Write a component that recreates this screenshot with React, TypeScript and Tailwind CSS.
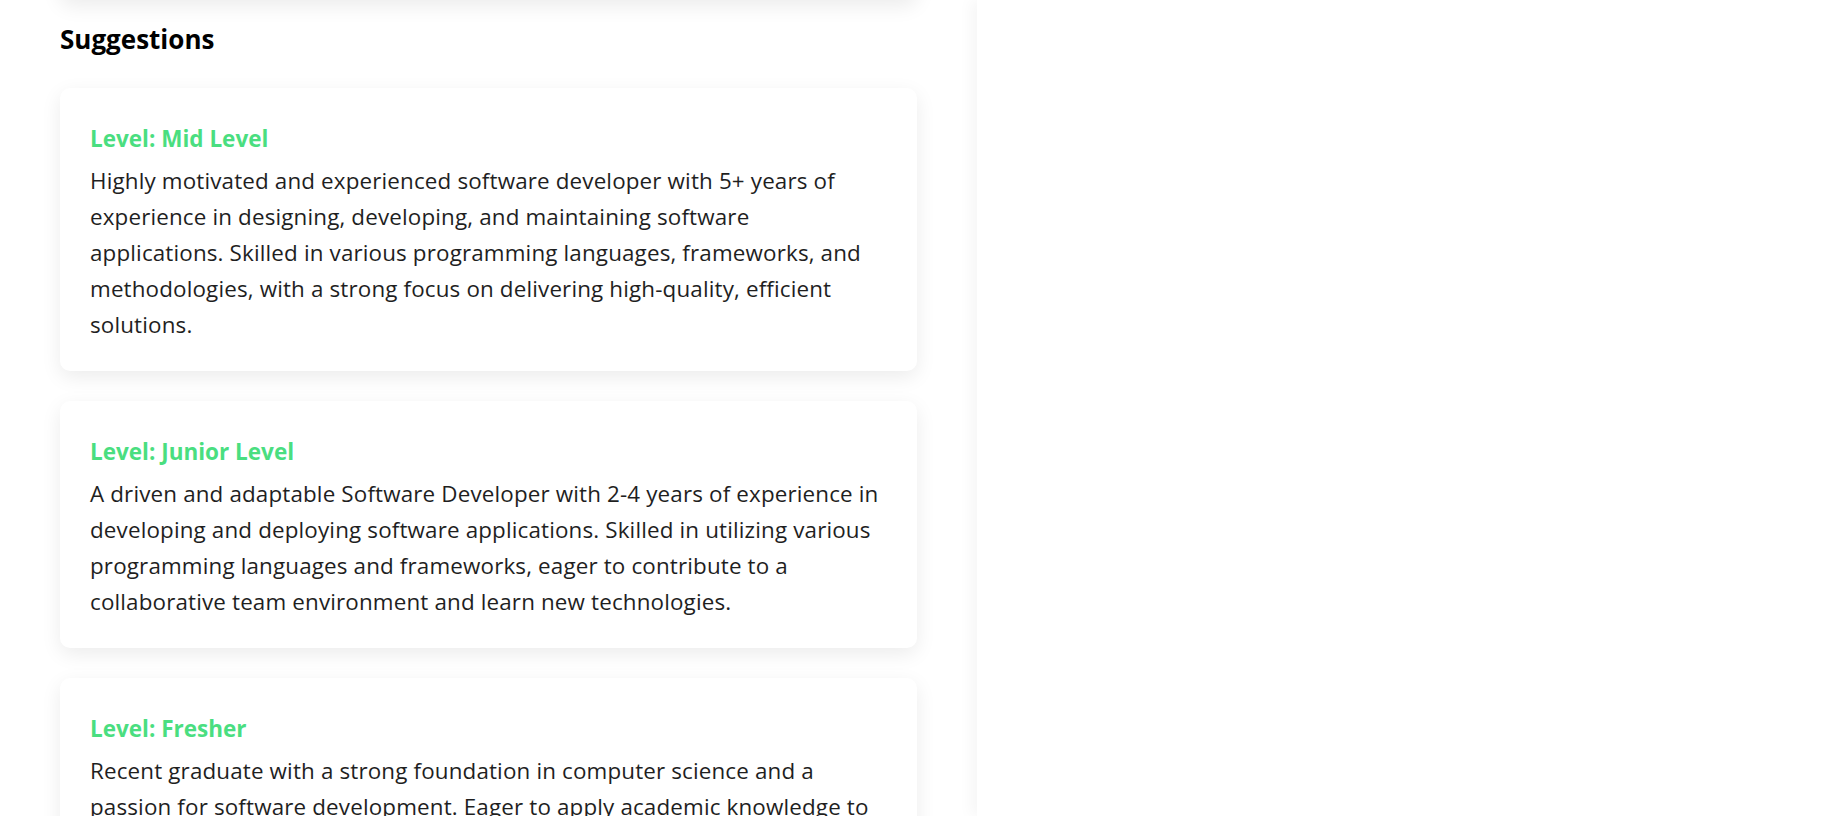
import React from 'react';

interface Suggestion {
  level: string;
  lines: string[];
}

// lines are kept as they wrap in the design
const suggestions: Suggestion[] = [
  {
    level: 'Mid Level',
    lines: [
      'Highly motivated and experienced software developer with 5+ years of',
      'experience in designing, developing, and maintaining software',
      'applications. Skilled in various programming languages, frameworks, and',
      'methodologies, with a strong focus on delivering high-quality, efficient',
      'solutions.',
    ],
  },
  {
    level: 'Junior Level',
    lines: [
      'A driven and adaptable Software Developer with 2-4 years of experience in',
      'developing and deploying software applications. Skilled in utilizing various',
      'programming languages and frameworks, eager to contribute to a',
      'collaborative team environment and learn new technologies.',
    ],
  },
  {
    level: 'Fresher',
    lines: [
      'Recent graduate with a strong foundation in computer science and a',
      'passion for software development. Eager to apply academic knowledge to',
      'real-world projects, learn from experienced professionals, and grow as a',
      'developer in a dynamic team.',
    ],
  },
];

function SuggestionCard({ level, lines }: Suggestion) {
  return (
    <div className="bg-white rounded-[10px] shadow-[0_6px_20px_rgba(0,0,0,0.08)] px-[30px] pt-[37px] pb-[28px]">
      <h3 className="text-[22.5px] leading-[28px] font-bold text-[#4ade80]">Level: {level}</h3>
      <p className="mt-[10px] whitespace-nowrap text-[22.4px] leading-[36px] tracking-[0.15px] text-[#1f1f1f]">
        {lines.map((line, i) => (
          <React.Fragment key={i}>
            {line}
            {i < lines.length - 1 && <br />}
          </React.Fragment>
        ))}
      </p>
    </div>
  );
}

export default function App() {
  return (
    <div className="flex h-[816px] overflow-hidden bg-white font-['Open_Sans',sans-serif]">
      {/* Left panel */}
      <div className="w-[977px] shrink-0 px-[60px]">
        {/* previous card, scrolled out of view */}
        <div className="h-[100px] -mt-[100px] bg-white rounded-[10px] shadow-[0_6px_20px_rgba(0,0,0,0.08)]" />

        <h2 className="mt-[23px] text-[26px] leading-[32px] font-bold text-black">Suggestions</h2>

        <div className="mt-[33px] flex flex-col gap-[30px]">
          {suggestions.map((s) => (
            <SuggestionCard key={s.level} level={s.level} lines={s.lines} />
          ))}
        </div>
      </div>

      {/* Right panel */}
      <div className="relative z-10 flex-1 bg-white shadow-[-6px_0_14px_rgba(0,0,0,0.04)]" />
    </div>
  );
}
